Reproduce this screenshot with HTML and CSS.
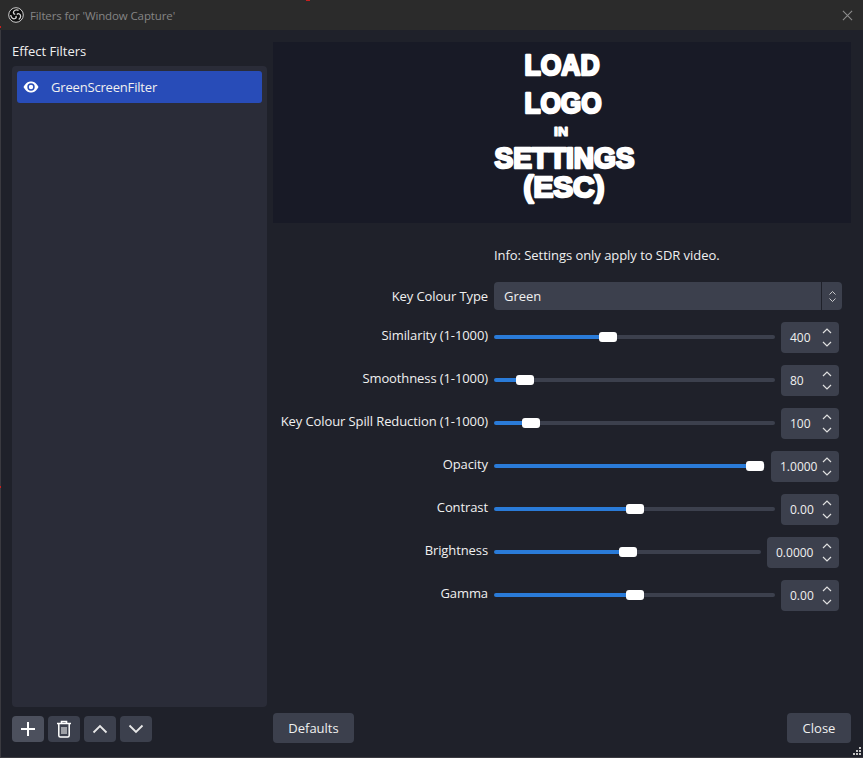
FILE: index.html
```html
<!DOCTYPE html>
<html lang="en">
<head>
    <meta charset="UTF-8">
    <title>Filters for 'Window Capture'</title>
    <link rel="stylesheet" href="styles.css">
</head>
<body>
    <svg class="sprites" width="0" height="0">
        <symbol id="up" viewBox="0 0 12 8"><path d="M2 6 L6 2 L10 6" fill="none" stroke="currentColor" stroke-width="1.2"/></symbol>
        <symbol id="down" viewBox="0 0 12 8"><path d="M2 2 L6 6 L10 2" fill="none" stroke="currentColor" stroke-width="1.2"/></symbol>
    </svg>
    <div class="window">
        <div class="titlebar">
            <svg class="obs-logo" viewBox="0 0 16 16">
                <circle cx="8" cy="8" r="7.3" fill="#0c0c0c" stroke="#d0d0d0" stroke-width="1"/>
                <g fill="none" stroke="#d8d8d8" stroke-width="1.3">
                    <path d="M10.6 3.4 C8 2.2 5.4 3.4 5.4 5.6 C5.4 6.8 6.4 7.4 7.2 7.4"/>
                    <path d="M10.6 3.4 C8 2.2 5.4 3.4 5.4 5.6 C5.4 6.8 6.4 7.4 7.2 7.4" transform="rotate(120 8 8)"/>
                    <path d="M10.6 3.4 C8 2.2 5.4 3.4 5.4 5.6 C5.4 6.8 6.4 7.4 7.2 7.4" transform="rotate(240 8 8)"/>
                </g>
            </svg>
            <span class="title-text">Filters for 'Window Capture'</span>
            <svg class="close-x" viewBox="0 0 12 12"><path d="M1 1 L11 11 M11 1 L1 11" stroke="#8c8c8c" stroke-width="1.2"/></svg>
        </div>
        <div class="content">
            <div class="left-col">
                <div class="list-label">Effect Filters</div>
                <div class="filter-list">
                    <div class="filter-item">
                        <svg class="eye" viewBox="0 0 16 12">
                            <path d="M0.5 6 C3 1.5 5.5 0.5 8 0.5 C10.5 0.5 13 1.5 15.5 6 C13 10.5 10.5 11.5 8 11.5 C5.5 11.5 3 10.5 0.5 6Z" fill="#fff"/>
                            <circle cx="8" cy="6" r="3.7" fill="#284cb8"/>
                            <circle cx="8" cy="6" r="2.2" fill="#fff"/>
                        </svg>
                        <span class="filter-name">GreenScreenFilter</span>
                    </div>
                </div>
                <div class="list-tools">
                    <button class="tool tool-active">
                        <svg width="16" height="16" viewBox="0 0 16 16"><path d="M8 1 V15 M1 8 H15" stroke="#fff" stroke-width="2"/></svg>
                    </button>
                    <button class="tool">
                        <svg width="16" height="18" viewBox="0 0 16 18">
                            <path d="M1 3.5 H15 M5.5 3 V1.5 H10.5 V3" fill="none" stroke="#fff" stroke-width="1.6"/>
                            <path d="M2.8 4 V15.5 Q2.8 17 4.3 17 H11.7 Q13.2 17 13.2 15.5 V4" fill="none" stroke="#fff" stroke-width="1.5"/>
                            <path d="M6 7 V14 M8 7 V14 M10 7 V14" stroke="#fff" stroke-width="1"/>
                        </svg>
                    </button>
                    <button class="tool">
                        <svg width="16" height="10" viewBox="0 0 16 10"><path d="M1.5 8.5 L8 2 L14.5 8.5" fill="none" stroke="#e8e8e8" stroke-width="1.8"/></svg>
                    </button>
                    <button class="tool">
                        <svg width="16" height="10" viewBox="0 0 16 10"><path d="M1.5 1.5 L8 8 L14.5 1.5" fill="none" stroke="#e8e8e8" stroke-width="1.8"/></svg>
                    </button>
                </div>
            </div>
            <div class="right-col">
                <div class="preview">
                    <svg class="logo" width="190" height="181" viewBox="0 0 190 181">
                        <text x="54.5" y="32.5" font-size="30" textLength="75" lengthAdjust="spacingAndGlyphs">LOAD</text>
                        <text x="54.5" y="70.5" font-size="30" textLength="77" lengthAdjust="spacingAndGlyphs">LOGO</text>
                        <text class="logo-small" x="84" y="94" font-size="12" textLength="14" lengthAdjust="spacingAndGlyphs">IN</text>
                        <text x="24.5" y="125.5" font-size="30" textLength="140" lengthAdjust="spacingAndGlyphs">SETTINGS</text>
                        <text x="53.5" y="154.5" font-size="30" textLength="81" lengthAdjust="spacingAndGlyphs">(ESC)</text>
                    </svg>
                </div>
                <div class="form">
                    <div class="info">Info: Settings only apply to SDR video.</div>

                    <div class="row">
                        <label>Key Colour Type</label>
                        <div class="combo">
                            <span class="combo-value">Green</span>
                            <span class="combo-arrows">
                                <svg width="9" height="6"><use href="#up"/></svg>
                                <svg width="9" height="6"><use href="#down"/></svg>
                            </span>
                        </div>
                    </div>

                    <div class="row">
                        <label>Similarity (1-1000)</label>
                        <div class="field">
                            <div class="slider"><i class="fill" style="--v:0.4"></i><i class="handle"></i><i class="rest"></i></div>
                            <div class="spin"><span class="spin-value">400</span><span class="spin-arrows"><svg width="12" height="8"><use href="#up"/></svg><svg width="12" height="8"><use href="#down"/></svg></span></div>
                        </div>
                    </div>

                    <div class="row">
                        <label>Smoothness (1-1000)</label>
                        <div class="field">
                            <div class="slider"><i class="fill" style="--v:0.085"></i><i class="handle"></i><i class="rest"></i></div>
                            <div class="spin"><span class="spin-value">80</span><span class="spin-arrows"><svg width="12" height="8"><use href="#up"/></svg><svg width="12" height="8"><use href="#down"/></svg></span></div>
                        </div>
                    </div>

                    <div class="row">
                        <label>Key Colour Spill Reduction (1-1000)</label>
                        <div class="field">
                            <div class="slider"><i class="fill" style="--v:0.105"></i><i class="handle"></i><i class="rest"></i></div>
                            <div class="spin"><span class="spin-value">100</span><span class="spin-arrows"><svg width="12" height="8"><use href="#up"/></svg><svg width="12" height="8"><use href="#down"/></svg></span></div>
                        </div>
                    </div>

                    <div class="row">
                        <label>Opacity</label>
                        <div class="field">
                            <div class="slider"><i class="fill" style="--v:0.995"></i><i class="handle"></i><i class="rest"></i></div>
                            <div class="spin spin-68"><span class="spin-value">1.0000</span><span class="spin-arrows"><svg width="12" height="8"><use href="#up"/></svg><svg width="12" height="8"><use href="#down"/></svg></span></div>
                        </div>
                    </div>

                    <div class="row">
                        <label>Contrast</label>
                        <div class="field">
                            <div class="slider"><i class="fill" style="--v:0.5"></i><i class="handle"></i><i class="rest"></i></div>
                            <div class="spin"><span class="spin-value">0.00</span><span class="spin-arrows"><svg width="12" height="8"><use href="#up"/></svg><svg width="12" height="8"><use href="#down"/></svg></span></div>
                        </div>
                    </div>

                    <div class="row">
                        <label>Brightness</label>
                        <div class="field">
                            <div class="slider"><i class="fill" style="--v:0.5"></i><i class="handle"></i><i class="rest"></i></div>
                            <div class="spin spin-72"><span class="spin-value">0.0000</span><span class="spin-arrows"><svg width="12" height="8"><use href="#up"/></svg><svg width="12" height="8"><use href="#down"/></svg></span></div>
                        </div>
                    </div>

                    <div class="row">
                        <label>Gamma</label>
                        <div class="field">
                            <div class="slider"><i class="fill" style="--v:0.5"></i><i class="handle"></i><i class="rest"></i></div>
                            <div class="spin"><span class="spin-value">0.00</span><span class="spin-arrows"><svg width="12" height="8"><use href="#up"/></svg><svg width="12" height="8"><use href="#down"/></svg></span></div>
                        </div>
                    </div>
                </div>
                <div class="actions">
                    <button class="push defaults">Defaults</button>
                    <button class="push close">Close</button>
                </div>
            </div>
        </div>
        <svg class="grip" viewBox="0 0 9 9">
            <path d="M7 0h2v2H7z M4 3h2v2H4z M7 3h2v2H7z M1 6h2v2H1z M4 6h2v2H4z M7 6h2v2H7z" fill="#c4c4c4"/>
        </svg>
    </div>
    <i class="mark mark-top"></i>
    <i class="mark mark-left-a"></i>
    <i class="mark mark-left-b"></i>
</body>
</html>
```
FILE: styles.css
```css
* {
    margin: 0;
    box-sizing: border-box;
}

body {
    position: relative;
    width: 863px;
    height: 758px;
    overflow: hidden;
    background-color: #1f212a;
    font-family: "Open Sans", "Noto Sans", sans-serif;
    font-size: 13px;
    color: #f0f0f0;
}

.sprites {
    position: absolute;
}

.window {
    position: relative;
    display: flex;
    flex-direction: column;
    height: 758px;
    border-left: 1px solid #3a3a40;
    border-bottom: 1px solid #3a3a40;
}

.titlebar {
    display: flex;
    align-items: center;
    flex: none;
    height: 30px;
    margin-left: -1px;
    padding: 0 10px 0 8px;
    background-color: #2b2b2b;
    color: #858585;
    font-size: 11.5px;
    letter-spacing: -0.12px;
}

.obs-logo {
    width: 16px;
    height: 16px;
}

.title-text {
    flex: 1;
    margin-left: 6px;
    padding-top: 1px;
}

.close-x {
    width: 11px;
    height: 11px;
}

.content {
    display: flex;
    flex: 1;
    gap: 6px;
    padding: 12px 12px 14px 11px;
    min-height: 0;
}

/* left column */
.left-col {
    display: flex;
    flex-direction: column;
    flex: none;
    width: 255px;
    margin-bottom: 1px;
}

.list-label {
    height: 24px;
    line-height: 18px;
}

.filter-list {
    flex: 1;
    padding: 5px;
    background-color: #2a2c38;
    border-radius: 4px;
}

.filter-item {
    display: flex;
    align-items: center;
    height: 32px;
    padding-left: 6px;
    background-color: #284cb8;
    border-radius: 3px;
}

.filter-name {
    letter-spacing: -0.18px;
}

.eye {
    width: 16px;
    height: 12px;
    margin-right: 12px;
}

.list-tools {
    display: flex;
    gap: 4px;
    margin-top: 9px;
}

.tool {
    display: flex;
    align-items: center;
    justify-content: center;
    width: 32px;
    height: 26px;
    padding: 0;
    border: none;
    border-radius: 4px;
    background-color: #3c404d;
}

.tool-active {
    background-color: #4c505d;
}

/* right column */
.right-col {
    display: flex;
    flex-direction: column;
    flex: 1;
    min-width: 0;
}

.preview {
    display: flex;
    justify-content: center;
    flex: none;
    height: 181px;
    background-color: #181a26;
}

.logo {
    margin-left: 6px;
}

.logo text {
    font-family: "Liberation Sans", sans-serif;
    font-weight: bold;
    fill: #fff;
    stroke: #fff;
    stroke-width: 2.6px;
    stroke-linejoin: round;
}

.logo .logo-small {
    stroke-width: 1.2px;
}

.form {
    display: flex;
    flex-direction: column;
    flex: 1;
    gap: 12px;
    padding: 22px 0 0 221px;
}

.info {
    height: 20px;
    line-height: 20px;
    margin-bottom: 5px;
    letter-spacing: -0.05px;
}

.row {
    display: flex;
    align-items: center;
    margin-left: -221px;
}

.row label {
    flex: none;
    width: 215px;
    padding-bottom: 5px;
    text-align: right;
    letter-spacing: -0.1px;
}

.row:nth-child(2) label {
    padding-bottom: 0;
}

.combo {
    display: flex;
    align-items: center;
    width: 348px;
    height: 28px;
    margin-left: 6px;
    background-color: #3c404d;
    border-radius: 4px;
}

.combo-value {
    flex: 1;
    padding-left: 10px;
}

.combo-arrows {
    display: flex;
    flex-direction: column;
    align-items: center;
    justify-content: center;
    gap: 1px;
    width: 21px;
    height: 28px;
    border-left: 1px solid #1f212a;
    color: #d8d8d8;
}

.field {
    display: flex;
    align-items: center;
    gap: 6px;
    width: 345px;
    margin-left: 6px;
}

.slider {
    display: flex;
    align-items: center;
    flex: 1;
    height: 29px;
    margin-bottom: 2px;
}

.fill {
    display: block;
    flex: none;
    width: calc((100% - 18px) * var(--v));
    height: 4px;
    background-color: #2a7bd8;
    border-radius: 2px 0 0 2px;
}

.handle {
    display: block;
    flex: none;
    width: 18px;
    height: 10px;
    background-color: #fff;
    border-radius: 3px;
}

.rest {
    display: block;
    flex: 1;
    height: 4px;
    background-color: #3c404d;
    border-radius: 0 2px 2px 0;
}

.spin {
    display: flex;
    align-items: center;
    flex: none;
    width: 58px;
    height: 31px;
    padding: 0 6px 0 9px;
    background-color: #3c404d;
    border-radius: 4px;
    font-size: 12px;
}

.spin-68 {
    width: 68px;
}

.spin-72 {
    width: 72px;
}

.spin-value {
    flex: 1;
}

.spin-arrows {
    display: flex;
    flex-direction: column;
    gap: 5px;
    color: #e0e0e0;
}

.spin-arrows svg {
    display: block;
}

.actions {
    display: flex;
    justify-content: space-between;
    flex: none;
    height: 30px;
}

.push {
    height: 30px;
    padding: 0;
    border: none;
    border-radius: 4px;
    background-color: #3c404d;
    color: #f0f0f0;
    font-family: inherit;
    font-size: 13px;
}

.defaults {
    width: 81px;
}

.close {
    width: 64px;
}

.grip {
    position: absolute;
    right: 2px;
    bottom: 1px;
    width: 9px;
    height: 9px;
}

/* stray red pixels on the window edge */
.mark {
    position: absolute;
    display: block;
    background-color: #c8201f;
}

.mark-top {
    left: 306px;
    top: 0;
    width: 4px;
    height: 1px;
}

.mark-left-a {
    left: 0;
    top: 26px;
    width: 1px;
    height: 2px;
}

.mark-left-b {
    left: 0;
    top: 486px;
    width: 1px;
    height: 2px;
}
```
